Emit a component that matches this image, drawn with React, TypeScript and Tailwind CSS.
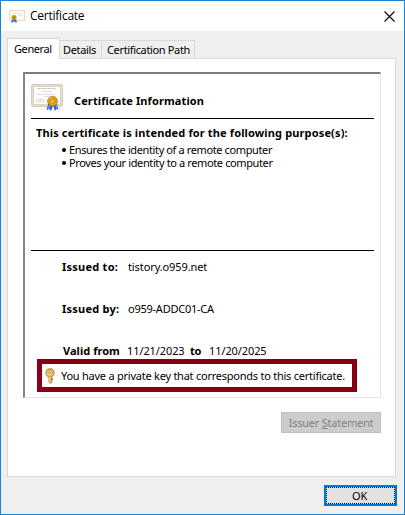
import React from 'react';

function CertificateIcon({ className }: { className: string }) {
  return (
    <svg className={className} viewBox="0 0 32 28" fill="none">
      <rect x="0.5" y="0.5" width="31" height="22" rx="1" fill="#e6dccb" stroke="#cdbfa9" strokeDasharray="2 1" />
      <rect x="2.5" y="2.5" width="27" height="18" fill="#fdfdfd" stroke="#ded3c1" />
      <path d="M7 4.5h18" stroke="#b9c2d3" strokeDasharray="2 .5" />
      <path d="M11 7.5h10M5 10.5h19M13 12.5h7" stroke="#dce0e9" />
      <path d="M6 15.5h7M5 17.5h9" stroke="#c2cad9" strokeDasharray="2 1" />
      <path d="M17.5 19 15.5 26l2.8-1 2 2 1.7-6 1.8 6 1.6-2 2.2.7-2.3-7z" fill="#2864d4" />
      <path d="m18.5 21-1 4M25 21l1.2 3.5" stroke="#78acf8" />
      <circle cx="21.5" cy="17.2" r="4.8" fill="#dda019" stroke="#b97c0c" strokeWidth=".9" />
      <circle cx="21.5" cy="17.2" r="2.2" fill="#edbd3f" stroke="#b9831a" strokeWidth=".7" />
      <path d="M18.2 15.2q1-2 3-2" stroke="#f7d36d" />
    </svg>
  );
}

function SmallCertificateIcon() {
  return (
    <svg className="h-[13px] w-4" viewBox="0 0 16 13" fill="none">
      <rect x=".5" y=".5" width="15" height="10" fill="#fbfbfa" stroke="#ead9bd" />
      <path d="M4 3.5h6M11 3.5h2M9 5.5h4" stroke="#e4e5ea" />
      <path d="m3 9-1 3.5h2L5 11l1 1.5h2L7 9z" fill="#2f78dd" />
      <circle cx="5" cy="7.5" r="2.5" fill="#cc981d" />
      <path d="M4 7.5h2" stroke="#96700c" />
    </svg>
  );
}

function KeyIcon() {
  return (
    <svg className="h-4 w-[10px] shrink-0" viewBox="0 0 10 16" fill="none">
      <path d="M4 8h2.5v6.5L5.2 15.5 4 14.2z" fill="#f2c763" stroke="#ad762b" strokeWidth=".8" />
      <path d="M6.5 10.5h1v1h-1M6.5 13h1" stroke="#a9691e" />
      <circle cx="5" cy="4.8" r="4.1" fill="#efbd54" stroke="#b67c2d" strokeWidth=".9" />
      <ellipse cx="5" cy="3.5" rx="1.8" ry="1.1" fill="#fff" stroke="#ad7933" strokeWidth=".7" />
      <path d="M2.2 5.8q1.5 1 3.8.5M5 8v5" stroke="#ffe3a0" strokeWidth=".8" />
    </svg>
  );
}

export default function App() {
  return (
    <div className="flex h-[515px] w-[405px] flex-col border border-[#1883d7] bg-[#efefef] font-['Noto_Sans',sans-serif] text-[11px] leading-[13px] tracking-[-0.24px] whitespace-nowrap text-black">
      <header className="flex h-[30px] shrink-0 items-center bg-white pl-2">
        <SmallCertificateIcon />
        <h1 className="ml-[5px] flex-1 font-['Open_Sans',sans-serif] text-[12px] leading-4">Certificate</h1>
        <svg className="mr-[9px] h-[11px] w-[11px]" viewBox="0 0 11 11" stroke="black" strokeWidth="1.1"><path d="m.5.5 10 10m0-10-10 10" /></svg>
      </header>
      <nav className="mt-[7px] ml-[6px] flex h-5 shrink-0 items-end">
        <div className="z-10 -mb-px h-[21px] w-[53px] border border-b-0 border-[#d9d9d9] bg-white pt-[3px] pl-[6px] tracking-[-0.4px]">General</div>
        <div className="h-[18px] w-[42px] border-t border-r border-[#d9d9d9] pt-[2px] pl-[3px] tracking-[-0.35px]">Details</div>
        <div className="h-[18px] w-[93px] border-t border-r border-[#d9d9d9] pt-[2px] pl-[5px] tracking-[-0.35px]">Certification Path</div>
      </nav>
      <main className="ml-[6px] flex h-[419px] w-[389px] shrink-0 flex-col border border-[#d9d9d9] bg-white pt-[13px] pl-[15px]">
        <section className="flex h-[326px] w-[358px] shrink-0 flex-col border-t-2 border-r border-b border-l-2 border-t-[#7d7d7d] border-r-[#e3e3e3] border-b-[#e3e3e3] border-l-[#858585] pl-[6px]">
          <div className="flex h-[44px] w-[343px] shrink-0 pt-[10px]">
            <CertificateIcon className="h-7 w-8 shrink-0" />
            <h2 className="mt-[10px] ml-[11px] font-bold tracking-[0.11px]">Certificate Information</h2>
          </div>
          <div className="h-px w-[343px] shrink-0 bg-black" />
          <div className="h-[131px] shrink-0 pt-[7px] pl-[5px]">
            <p className="font-bold tracking-[0.14px]">This certificate is intended for the following purpose(s):</p>
            <ul className="mt-[4px] pl-[26px] tracking-[-0.38px]">
              <li className="flex h-[13px] items-center"><span className="mr-[3px] h-1 w-1 rounded-full bg-black" />Ensures the identity of a remote computer</li>
              <li className="flex h-[13px] items-center"><span className="mr-[3px] h-1 w-1 rounded-full bg-black" />Proves your identity to a remote computer</li>
            </ul>
          </div>
          <div className="h-px w-[343px] shrink-0 bg-black" />
          <dl className="shrink-0 pt-[9px] pl-[31px]">
            <div className="flex h-[42px]"><dt className="w-[66px] font-bold tracking-[0.25px]">Issued to:</dt><dd className="tracking-[-0.1px]">tistory.o959.net</dd></div>
            <div className="flex h-[42px]"><dt className="w-[66px] font-bold tracking-[0.25px]">Issued by:</dt><dd>o959-ADDC01-CA</dd></div>
            <div className="flex h-[15px]"><dt className="w-[65px] pl-px font-bold tracking-[0.04px]">Valid from</dt><dd className="w-[63px] tracking-[-0.1px]">11/21/2023</dd><dt className="w-[19px] font-bold">to</dt><dd className="tracking-[-0.1px]">11/20/2025</dd></div>
          </dl>
          <div className="ml-[6px] flex h-[33px] w-[320px] shrink-0 items-center border-[5px] border-[#870016] bg-white pl-[3px]">
            <KeyIcon />
            <span className="-mt-px ml-[6px]">You have a private key that corresponds to this certificate.</span>
          </div>
        </section>
        <button className="mt-[14px] ml-[258px] flex h-[21px] w-[100px] shrink-0 items-center justify-center border border-[#bfbfbf] bg-[#cccccc] tracking-[-0.24px] text-[#838383]"><span>Issuer <u>S</u>tatement</span></button>
      </main>
      <footer className="mt-2 ml-[323px]">
        <button className="flex h-[21px] w-[73px] border-2 border-[#0078d7] bg-[#e1e1e1]"><span className="flex h-full w-full items-center justify-center border border-dotted border-black pr-[2px] tracking-[-0.24px]">OK</span></button>
      </footer>
    </div>
  );
}
